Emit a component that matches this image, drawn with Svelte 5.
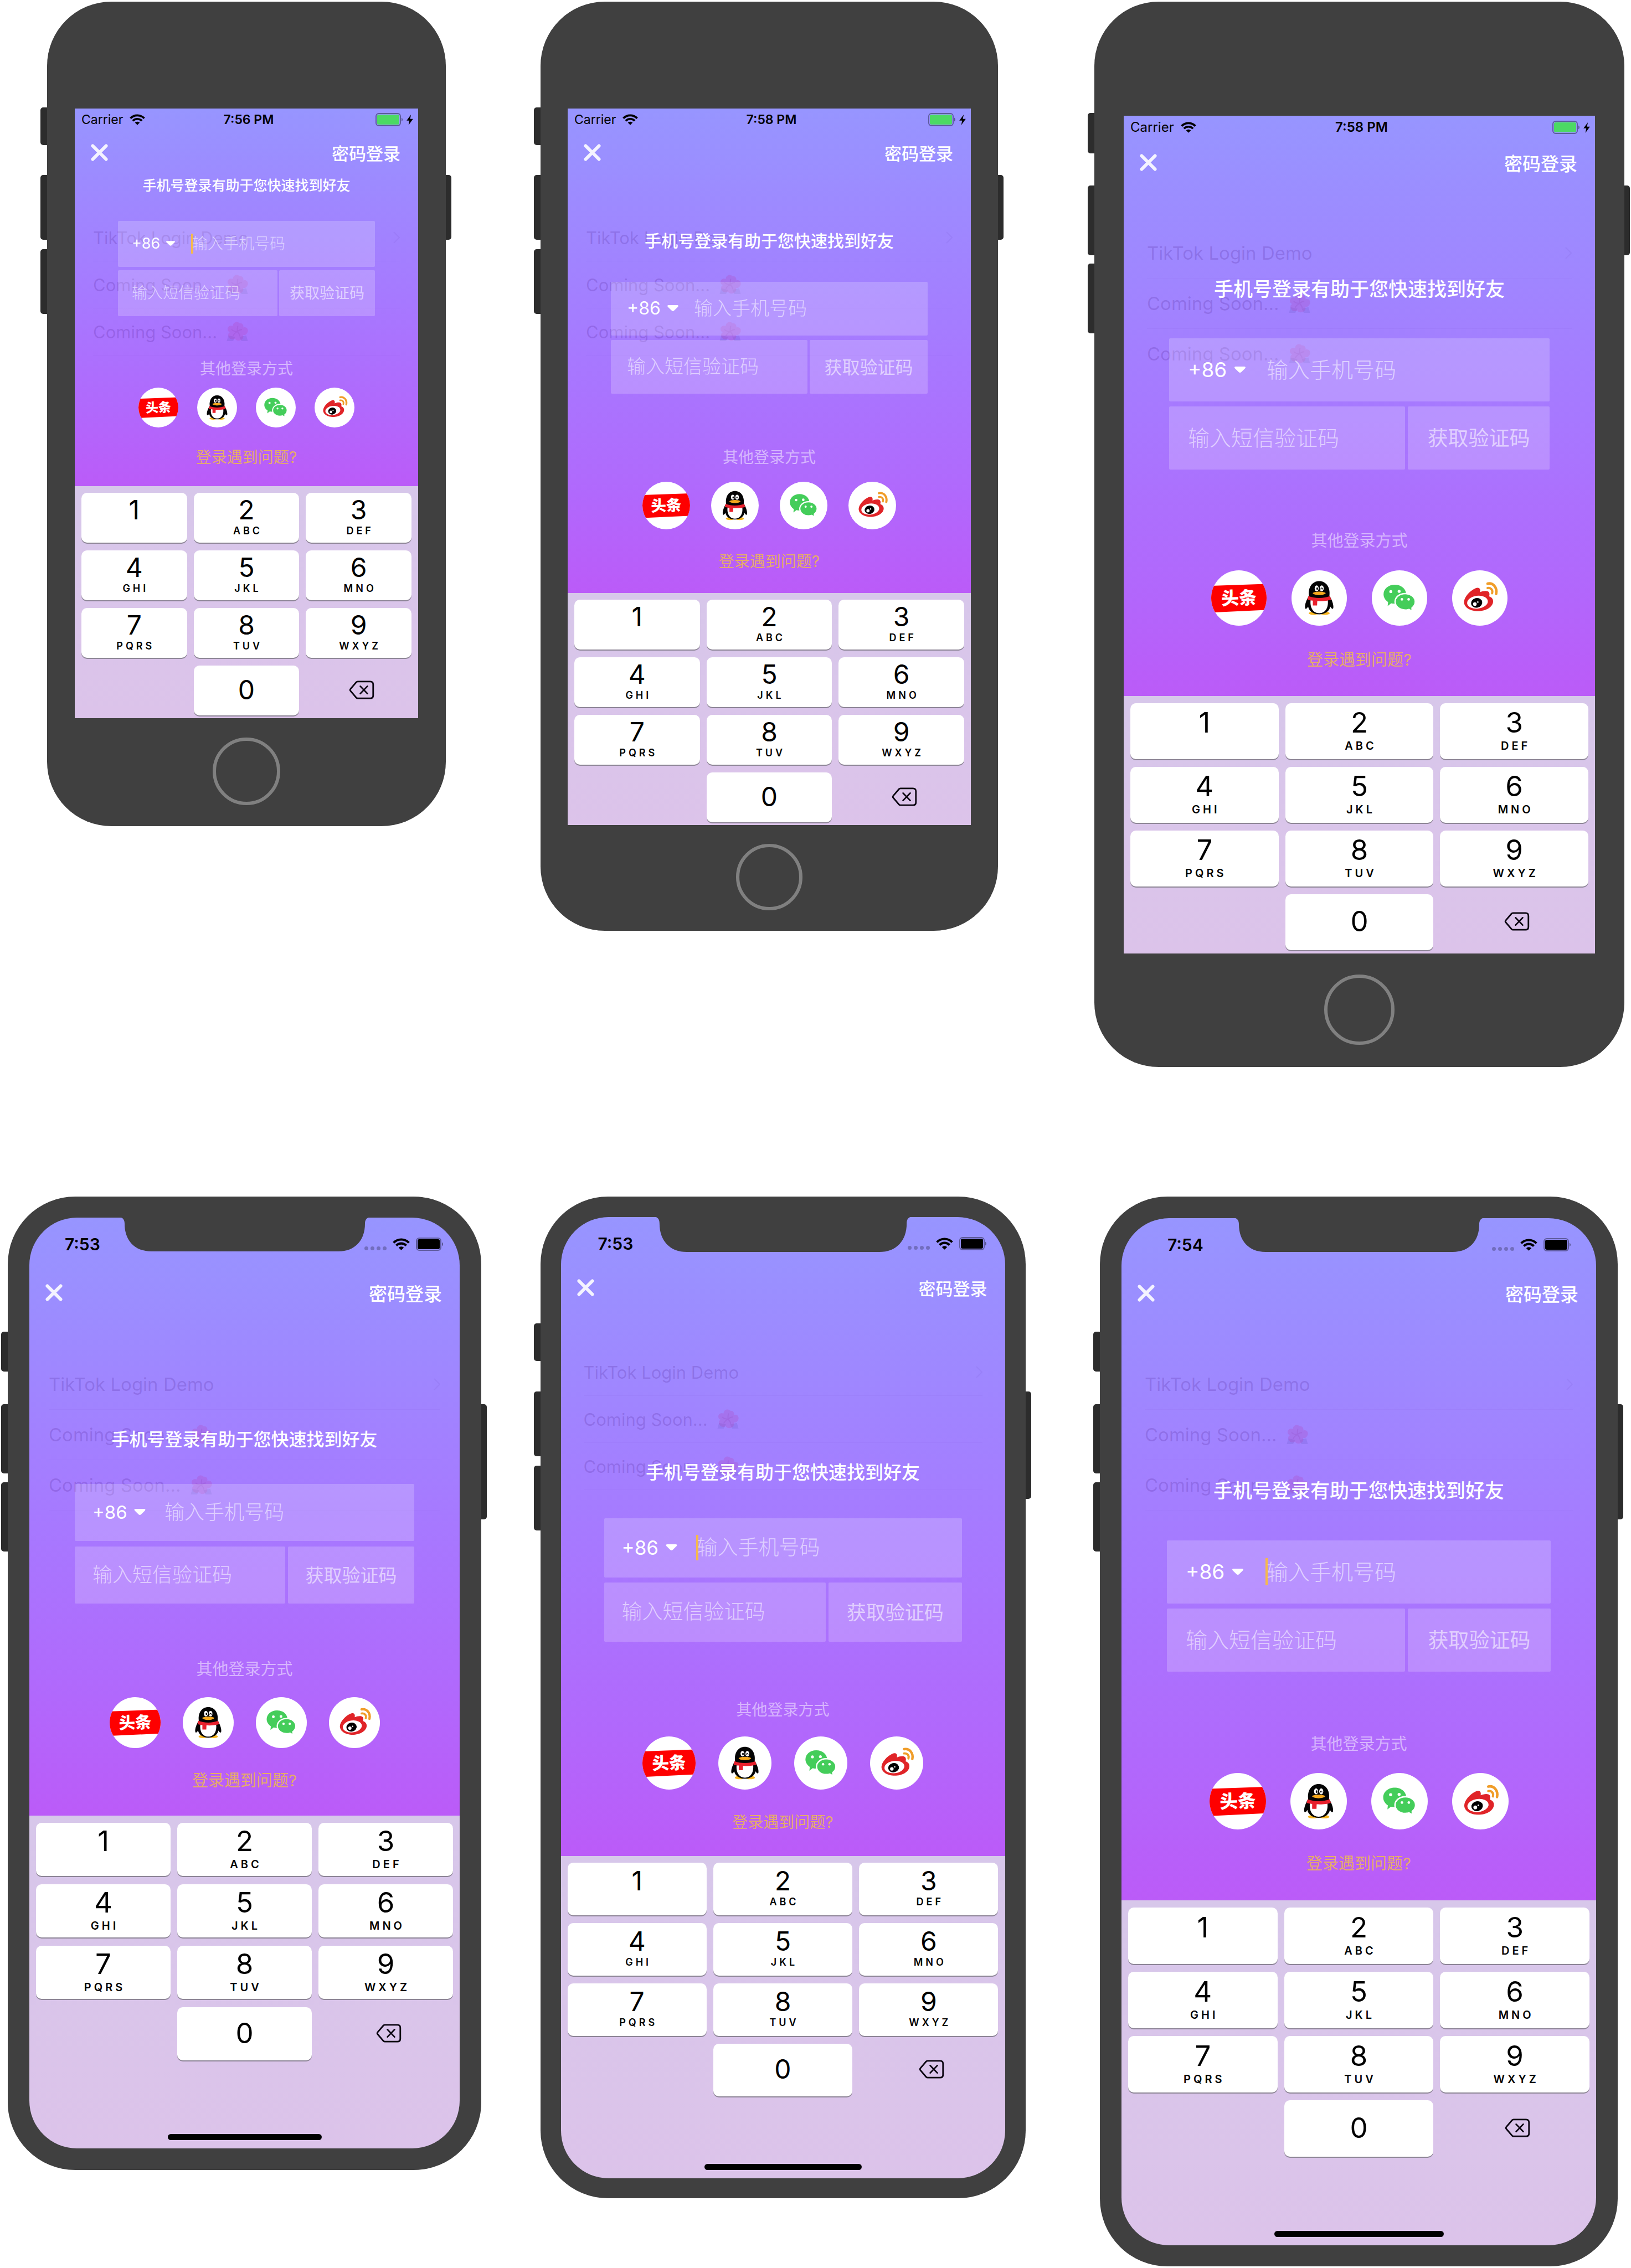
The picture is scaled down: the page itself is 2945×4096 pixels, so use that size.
<script>
  const rows = [
    [
      { model: 'se', time: '7:56 PM', notch: false, focused: true },
      { model: 'eight', time: '7:58 PM', notch: false, focused: false },
      { model: 'plus', time: '7:58 PM', notch: false, focused: false }
    ],
    [
      { model: 'ten', time: '7:53', notch: true, focused: false },
      { model: 'tenr', time: '7:53', notch: true, focused: true },
      { model: 'max', time: '7:54', notch: true, focused: true }
    ]
  ];

  const keys = [
    ['1', ''],
    ['2', 'ABC'],
    ['3', 'DEF'],
    ['4', 'GHI'],
    ['5', 'JKL'],
    ['6', 'MNO'],
    ['7', 'PQRS'],
    ['8', 'TUV'],
    ['9', 'WXYZ']
  ];

  const listItems = [
    { label: 'TikTok Login Demo', link: true },
    { label: 'Coming Soon...', link: false },
    { label: 'Coming Soon...', link: false }
  ];
</script>

{#snippet wifi()}
  <svg class="wifi" viewBox="0 0 30 21" aria-hidden="true">
    <g fill="none" stroke="#000" stroke-width="4">
      <path d="M1.600 8A18.600 18.600 0 0 1 28.400 8" />
      <path d="M6.300 12.900A12 12 0 0 1 23.700 12.900" />
    </g>
    <path d="M15 21 10.400 16.500A6.500 6.500 0 0 1 19.600 16.500Z" />
  </svg>
{/snippet}

{#snippet battery(fill)}
  <svg class="battery" viewBox="0 0 51 24" aria-hidden="true">
    <rect x="1" y="1" width="44" height="22" rx="5" fill="none" stroke="#000" stroke-opacity=".38" stroke-width="2" />
    <rect x="3" y="3" width="40" height="18" rx="3" {fill} />
    <path d="M47 8.500a4 4 0 0 1 0 7z" fill-opacity=".42" />
  </svg>
{/snippet}

{#snippet flower()}
  <svg class="flower" viewBox="0 0 42 40" aria-hidden="true">
    <path d="M4 27 1 38 13 38 17 30zM38 27 41 38 29 38 25 30z" fill="#4a3fa8" opacity=".14" />
    <g fill="#b832a4" opacity=".2">
      <path d="M21 20C12 17 10 6 16 3c4-3 8 0 9 1 6-1 9 5 7 8 8-2 11 5 8 10-2 4-6 5-8 4 2 6-3 11-9 11-4 0-6-2-6-4-5 4-12 1-13-5C3 24 5 22 7 21 1 19 1 11 7 9c7-2 12 5 14 11z" />
    </g>
    <path d="M21 20c3-3 6-4 9-4M21 20c3 3 5 6 5 9M21 20c-4 2-7 5-8 8M21 20c-4 0-8-1-11-4M21 20c0-4 0-8 1-11" fill="none" stroke="#7a2ba0" stroke-width="2" opacity=".12" />
  </svg>
{/snippet}

{#snippet toutiao()}
  <svg viewBox="0 0 100 100" aria-hidden="true">
    <path d="M0 28 100 24.4V71.4L0 76.2z" fill="#fe0000" />
    <text x="50" y="61.5" text-anchor="middle" font-size="32" font-weight="900" fill="#fff" transform="rotate(-2 50 50)">头条</text>
  </svg>
{/snippet}

{#snippet qq()}
  <svg viewBox="0 0 100 100" aria-hidden="true">
    <ellipse cx="40" cy="77.5" rx="9" ry="3" fill="#f7b51e" />
    <ellipse cx="60" cy="77.5" rx="9" ry="3" fill="#f7b51e" />
    <path d="M31.5 46C29.5 30 38 19.5 50 19.5S70.500 30 68.500 46C72 51 76.500 62 75.500 67.500 75 71.500 72 69 70 65.500 68.500 74 60 79.500 50 79.500S31.500 74 30 65.500C28 69 25 71.500 24.500 67.500 23.500 62 28 51 31.500 46z" fill="#040404" />
    <path d="M34.500 54C33 66 38 77.500 50 77.500S67 66 65.500 54z" fill="#fff" />
    <path d="M30.500 46.500C42 51 58 51 69.500 46.500L71.500 53C66 55 57 56 46.500 55.500L46.200 63.500H38.500V54.800C35 54.500 32 54 28.800 53z" fill="#e8202c" />
    <ellipse cx="45.400" cy="32.500" rx="3.600" ry="5.200" fill="#fff" />
    <ellipse cx="54.600" cy="32.500" rx="3.600" ry="5.200" fill="#fff" />
    <ellipse cx="46.400" cy="33" rx="1.500" ry="2.300" />
    <path d="M53 34.500c0-3.500 3-3.500 3 0" fill="none" stroke="#000" stroke-width="1.200" />
    <path d="M38.200 41C42 37.500 58 37.500 61.800 41 60 46 40 46 38.200 41z" fill="#f5a81c" />
  </svg>
{/snippet}

{#snippet wechat()}
  <svg viewBox="0 0 100 100" aria-hidden="true">
    <g fill="#44cd5a">
      <path d="M41.500 26C53 26 62 33.500 62 43.300S53 60.500 41.500 60.500C39 60.500 37 60.200 35 59.600L28.600 64.500 29.400 57.300C24.500 54 21.200 49 21.200 43.300 21.200 33.500 30 26 41.500 26z" />
      <path d="M60.300 42C70.500 42 78.500 48.500 78.500 56.800 78.500 61.200 76 65.300 72.600 68L73 74.200 67 70.700C65 71.300 62.500 71.700 60.300 71.700 50 71.700 42 65 42 56.800S50 42 60.300 42z" stroke="#fff" stroke-width="2.600" />
    </g>
    <g fill="#fff">
      <ellipse cx="34.300" cy="38.500" rx="2.700" ry="2.700" />
      <ellipse cx="49.300" cy="38" rx="2.700" ry="2.700" />
      <circle cx="54.300" cy="52.400" r="2.300" />
      <circle cx="66.500" cy="52.400" r="2.300" />
    </g>
  </svg>
{/snippet}

{#snippet weibo()}
  <svg viewBox="0 0 100 100" aria-hidden="true">
    <path d="M21.500 57C22 48 32 37 42 32.500 48 30 52 32.500 50.500 39.500 56 37 64 36 66.500 39.500 68 42 67.500 44.500 66.800 47 71 48.500 74.500 51.500 74 57 73 67 60 73.800 46.500 73.800 33 73.800 21.200 67 21.500 57z" fill="#e02428" />
    <ellipse cx="45.800" cy="57.500" rx="18.800" ry="11.600" fill="#fff" transform="rotate(-7 45.800 57.500)" />
    <ellipse cx="44.300" cy="58.800" rx="10.200" ry="8.700" transform="rotate(-12 44.300 58.800)" />
    <circle cx="41" cy="61" r="3.300" fill="#fff" />
    <circle cx="46.400" cy="57.300" r="1.400" fill="#fff" />
    <g fill="none" stroke="#f09d28" stroke-linecap="round">
      <path d="M64 24C74 22 82 31 79.500 42.500" stroke-width="4.600" />
      <path d="M64 32C70 31 74 35.500 72.200 41.500" stroke-width="4" />
    </g>
  </svg>
{/snippet}

{#snippet phone(d)}
  <article class="device {d.model}" class:notched={d.notch}>
    <span class="side mute"></span>
    <span class="side up"></span>
    <span class="side down"></span>
    <span class="side power"></span>
    <div class="body">
      <div class="screen">
        <section class="login">
          <ul class="behind">
            {#each listItems as item}
              <li>
                <span>{item.label}</span>
                {#if item.link}
                  <svg class="chevron" viewBox="0 0 12 22" aria-hidden="true"><path d="M1 1 11 11 1 21" /></svg>
                {:else}
                  {@render flower()}
                {/if}
              </li>
            {/each}
          </ul>

          {#if d.notch}
            <svg class="notch" viewBox="0 0 458 62" preserveAspectRatio="none" aria-hidden="true">
              <path d="M0 0C8 0 12 4 12 12 12 42 30 62 60 62H398C428 62 446 42 446 12 446 4 450 0 458 0z" />
            </svg>
            <div class="status">
              <span class="time">{d.time}</span>
              <span class="signals">
                <span class="dots"><i></i><i></i><i></i><i></i></span>
                {@render wifi()}
                {@render battery('#000')}
              </span>
            </div>
          {:else}
            <div class="status">
              <span class="carrier">Carrier {@render wifi()}</span>
              <span class="time">{d.time}</span>
              <span class="signals">
                {@render battery('#4cd964')}
                <svg class="bolt" viewBox="0 0 11 18" aria-hidden="true"><path d="M7.500 0 0 10.200H4.800L3.300 18 11 7.400H6z" /></svg>
              </span>
            </div>
          {/if}

          <nav>
            <button class="close" aria-label="关闭">
              <svg viewBox="0 0 32 32" aria-hidden="true"><path d="M3.500 3.500 28.500 28.500M28.500 3.500 3.500 28.500" /></svg>
            </button>
            <a href="#password">密码登录</a>
          </nav>

          <h2>手机号登录有助于您快速找到好友</h2>

          <form onsubmit={(e) => e.preventDefault()}>
            <div class="field phone-field">
              <div class="area">
                <select aria-label="国家或地区代码"><option>+86</option></select>
                <svg class="drop" viewBox="0 0 22 12" aria-hidden="true"><path d="M2.500 0H19.500C22 0 22.500 2 21 3.500L13.500 10.800C12 12.300 10 12.300 8.500 10.800L1 3.500C-.5 2 0 0 2.500 0z" /></svg>
              </div>
              {#if d.focused}<span class="caret"></span>{/if}
              <input type="tel" placeholder="输入手机号码" aria-label="手机号码" />
            </div>
            <div class="field code-field">
              <input type="text" placeholder="输入短信验证码" aria-label="短信验证码" />
            </div>
            <button class="get-code" type="submit">获取验证码</button>
          </form>

          <p class="other">其他登录方式</p>
          <div class="providers">
            <button aria-label="头条">{@render toutiao()}</button>
            <button aria-label="QQ">{@render qq()}</button>
            <button aria-label="微信">{@render wechat()}</button>
            <button aria-label="微博">{@render weibo()}</button>
          </div>
          <a class="help" href="#help">登录遇到问题?</a>
        </section>

        <section class="keyboard">
          <div class="keys">
            {#each keys as [digit, letters]}
              <button class="key"><span class="digit">{digit}</span><span class="letters">{letters}</span></button>
            {/each}
            <span></span>
            <button class="key"><span class="digit">0</span></button>
            <button class="erase" aria-label="删除">
              <svg viewBox="0 0 48 36" aria-hidden="true">
                <path d="M16.500 2H40.500C44 2 46 4 46 7.500V28.500C46 32 44 34 40.500 34H16.500C15.300 34 14.500 33.600 13.700 32.800L2.800 20C1.700 18.700 1.700 17.300 2.800 16L13.700 3.200C14.500 2.400 15.300 2 16.500 2z" />
                <path d="M21.500 11 35 25M35 11 21.500 25" />
              </svg>
            </button>
          </div>
          {#if d.notch}<div class="indicator"></div>{/if}
        </section>
      </div>
      {#if !d.notch}<div class="chin"><button class="home" aria-label="主屏幕"></button></div>{/if}
    </div>
  </article>
{/snippet}

<main>
  {#each rows as row, i}
    <div class="row" class:lower={i === 1}>
      {#each row as d}
        {@render phone(d)}
      {/each}
    </div>
  {/each}
</main>

<style>
  :global(body) {
    margin: 0;
    background: #fff;
  }

  main {
    display: flex;
    flex-direction: column;
    gap: 234px;
    padding: 3px 0;
    box-sizing: border-box;
    overflow: hidden;
    font-family: Inter, 'Noto Sans CJK SC', sans-serif;
    color: #000;
  }

  .row {
    display: flex;
    align-items: flex-start;
    justify-content: space-between;
    padding: 0 12px 0 85px;
  }

  .row.lower {
    padding: 0 24px 0 14px;
  }

  button,
  input,
  select {
    margin: 0;
    padding: 0;
    border: 0;
    background: none;
    font: inherit;
    color: inherit;
    outline: 0;
  }

  button {
    cursor: pointer;
  }

  svg {
    display: block;
    flex: none;
  }

  /* Device metrics */
  .device {
    --status: 40px;
    --nav: 82px;
    --nav-font: 31px;
    --inset: 78px;
    --list-font: 31px;
    --list-row: 85px;
    --small-font: 28px;
    --digit: 48px;
    --digit-line: 44px;
    --letters: 18px;
    --key-gap: 14px;
    --stack-gap: 6px;
    --pad: 12px;
    position: relative;
    min-width: 0;
    z-index: 0;
  }

  .se {
    flex: 0 1 720px;
    --frame-top: 193px;
    --frame: 50px;
    --chin: 195px;
    --ring: 122px;
    --list-top: 191px;
    --list-pad: 33px;
    --title-gap: 1px;
    --title: 25px;
    --form-gap: 48px;
    --field: 83px;
    --field-gap: 6px;
    --field-split: 3px;
    --field-pad: 25px;
    --area: 134px;
    --input: 28px;
    --button: 27px;
    --drop: 16px;
    --caret: 36px;
    --other-gap: 79px;
    --icons-gap: 18px;
    --icon: 72px;
    --icon-space: 34px;
    --help-gap: 38px;
    --login-end: 36px;
    --key: 90px;
    --keyboard-end: 5px;
  }

  .eight {
    flex: 0 1 826px;
    margin-right: 3px;
    --frame-top: 193px;
    --frame: 49px;
    --chin: 191px;
    --ring: 120px;
    --list-top: 191px;
    --list-pad: 33px;
    --title-gap: 101px;
    --title: 30px;
    --form-gap: 58px;
    --field: 97px;
    --field-gap: 8px;
    --field-split: 4px;
    --field-pad: 29px;
    --area: 150px;
    --input: 34px;
    --button: 32px;
    --drop: 20px;
    --caret: 42px;
    --other-gap: 99px;
    --icons-gap: 28px;
    --icon: 86px;
    --icon-space: 38px;
    --help-gap: 42px;
    --login-end: 41px;
    --key: 90px;
    --keyboard-end: 5px;
  }

  .plus,
  .ten,
  .max {
    --nav-font: 33px;
    --inset: 82px;
    --list-font: 33px;
    --list-row: 91px;
    --small-font: 29px;
    --digit: 51px;
    --digit-line: 48px;
    --letters: 20px;
    --stack-gap: 8px;
    --pad: 13px;
  }

  .plus {
    flex: 0 1 957px;
    --status: 42px;
    --nav: 88px;
    --frame-top: 206px;
    --frame: 53px;
    --chin: 205px;
    --ring: 127px;
    --list-top: 203px;
    --list-pad: 42px;
    --title-gap: 167px;
    --title: 35px;
    --form-gap: 73px;
    --field: 114px;
    --field-gap: 9px;
    --field-split: 5px;
    --field-pad: 34px;
    --area: 176px;
    --input: 39px;
    --button: 37px;
    --drop: 22px;
    --caret: 48px;
    --other-gap: 113px;
    --icons-gap: 37px;
    --icon: 100px;
    --icon-space: 45px;
    --help-gap: 46px;
    --login-end: 49px;
    --key: 101px;
    --keyboard-end: 6px;
  }

  .notched {
    --status: 96px;
  }

  .ten {
    flex: 0 1 855px;
    --frame-top: 38px;
    --frame: 39px;
    --chin: 39px;
    --notch-width: 458px;
    --notch-height: 62px;
    --status-left: 64px;
    --status-right: 28px;
    --list-top: 256px;
    --list-pad: 35px;
    --title-gap: 207px;
    --title: 32px;
    --form-gap: 64px;
    --field: 103px;
    --field-gap: 10px;
    --field-split: 5px;
    --field-pad: 32px;
    --area: 162px;
    --input: 36px;
    --button: 33px;
    --drop: 21px;
    --caret: 46px;
    --other-gap: 103px;
    --icons-gap: 34px;
    --icon: 92px;
    --icon-space: 40px;
    --help-gap: 43px;
    --login-end: 47px;
    --key: 96px;
    --key-gap: 15px;
    --indicator-gap: 133px;
    --indicator: 278px;
  }

  .tenr {
    flex: 0 1 876px;
    margin-right: 28px;
    --nav: 66px;
    --frame-top: 37px;
    --frame: 37px;
    --chin: 36px;
    --notch-width: 471px;
    --notch-height: 64px;
    --status-left: 67px;
    --status-right: 32px;
    --list-top: 238px;
    --list-pad: 41px;
    --title-gap: 283px;
    --title: 33px;
    --form-gap: 67px;
    --field: 107px;
    --field-gap: 9px;
    --field-split: 5px;
    --field-pad: 32px;
    --area: 168px;
    --input: 37px;
    --button: 35px;
    --drop: 21px;
    --caret: 46px;
    --other-gap: 107px;
    --icons-gap: 32px;
    --icon: 96px;
    --icon-space: 41px;
    --help-gap: 43px;
    --login-end: 45px;
    --key: 95px;
    --indicator-gap: 122px;
    --indicator: 284px;
  }

  .max {
    flex: 0 1 935px;
    --frame-top: 39px;
    --frame: 39px;
    --chin: 38px;
    --notch-width: 458px;
    --notch-height: 62px;
    --status-left: 83px;
    --status-right: 44px;
    --list-top: 255px;
    --list-pad: 42px;
    --title-gap: 298px;
    --title: 35px;
    --form-gap: 74px;
    --field: 114px;
    --field-gap: 9px;
    --field-split: 5px;
    --field-pad: 34px;
    --area: 180px;
    --input: 39px;
    --button: 37px;
    --drop: 22px;
    --caret: 49px;
    --other-gap: 115px;
    --icons-gap: 36px;
    --icon: 102px;
    --icon-space: 44px;
    --help-gap: 46px;
    --login-end: 50px;
    --key: 102px;
    --indicator-gap: 134px;
    --indicator: 306px;
  }

  /* Hardware */
  .body {
    background: #404040;
    border-radius: 116px;
    padding: var(--frame-top) var(--frame) 0;
  }

  .notched .body {
    border-radius: 122px;
    padding-bottom: var(--chin);
  }

  .side {
    position: absolute;
    z-index: -1;
    left: -12px;
    width: 24px;
    border-radius: 5px;
    background: #2c2c2c;
  }

  .mute { top: 191px; height: 68px; }
  .up { top: 313px; height: 117px; }
  .down { top: 447px; height: 117px; }
  .power { top: 313px; height: 117px; left: auto; right: -10px; }

  .plus .mute { top: 201px; height: 73px; }
  .plus .up { top: 332px; height: 126px; }
  .plus .down { top: 473px; height: 126px; }
  .plus .power { top: 332px; height: 126px; }

  .notched .mute { top: 244px; height: 72px; }
  .notched .up { top: 375px; height: 125px; }
  .notched .down { top: 516px; height: 125px; }
  .notched .power { top: 375px; height: 208px; }

  .tenr .mute { top: 229px; height: 68px; }
  .tenr .up { top: 352px; height: 117px; }
  .tenr .down { top: 486px; height: 117px; }
  .tenr .power { top: 352px; height: 194px; }

  .chin {
    display: flex;
    align-items: center;
    justify-content: center;
    box-sizing: border-box;
    height: var(--chin);
    padding-bottom: 3px;
  }

  .home {
    box-sizing: border-box;
    width: var(--ring);
    height: var(--ring);
    border: 6px solid #808080;
    border-radius: 50%;
  }

  .screen {
    overflow: hidden;
  }

  .notched .screen {
    border-radius: 86px;
  }

  /* Login */
  .login {
    position: relative;
    display: flex;
    flex-direction: column;
    padding-bottom: var(--login-end);
    background: linear-gradient(#9795ff, #a778ff 52%, #b168fc 80%, #bb5bf8);
  }

  .notch {
    position: absolute;
    top: -1px;
    left: 50%;
    width: var(--notch-width);
    height: var(--notch-height);
    transform: translateX(-50%);
    fill: #404040;
  }

  .behind {
    position: absolute;
    top: var(--list-top);
    left: var(--list-pad);
    right: var(--list-pad);
    margin: 0;
    padding: 0;
    list-style: none;
    font-size: var(--list-font);
    color: rgba(50, 0, 110, 0.16);
  }

  .behind li {
    box-sizing: border-box;
    display: flex;
    align-items: center;
    gap: 16px;
    height: var(--list-row);
    border-bottom: 1px solid rgba(60, 0, 120, 0.03);
  }

  .flower {
    width: 41px;
    height: 38px;
  }

  .chevron {
    width: 12px;
    height: 22px;
    margin-left: auto;
    fill: none;
    stroke: rgba(50, 0, 110, 0.05);
    stroke-width: 2;
  }

  .status {
    position: relative;
    display: grid;
    grid-template-columns: 1fr auto 1fr;
    align-items: center;
    height: var(--status);
    padding: 0 4px 0 12px;
    font-size: 23px;
    line-height: 30px;
  }

  .plus .status {
    font-size: 24px;
  }

  .carrier,
  .signals {
    display: flex;
    align-items: center;
    gap: 12px;
  }

  .signals {
    justify-content: flex-end;
    gap: 5px;
    margin-right: 5px;
  }

  .time {
    font-weight: 600;
  }

  .wifi {
    width: 28px;
    height: 20px;
  }

  .battery {
    width: 51px;
    height: 24px;
  }

  .bolt {
    width: 12px;
    height: 19px;
  }

  .notched .status {
    display: flex;
    justify-content: space-between;
    padding: 0 var(--status-right) 0 var(--status-left);
    font-size: 30px;
  }

  .notched .signals {
    gap: 11px;
    margin: 0;
  }

  .notched .wifi {
    width: 31px;
    height: 22px;
  }

  .dots {
    display: flex;
    gap: 4px;
    padding-top: 15px;
  }

  .dots i {
    width: 7px;
    height: 7px;
    border-radius: 50%;
    background: rgba(0, 0, 0, 0.25);
  }

  nav {
    position: relative;
    box-sizing: border-box;
    display: flex;
    align-items: center;
    justify-content: space-between;
    height: var(--nav);
    padding: 0 32px 3px 29px;
    font-size: var(--nav-font);
    font-weight: 500;
  }

  a {
    color: #fff;
    text-decoration: none;
  }

  .close svg {
    width: 31px;
    height: 31px;
    fill: none;
    stroke: #f4f3ff;
    stroke-width: 6;
    stroke-linecap: round;
  }

  h2 {
    position: relative;
    margin: var(--title-gap) 0 0;
    font-size: var(--title);
    font-weight: 500;
    line-height: 32px;
    text-align: center;
    white-space: nowrap;
    color: #fff;
  }

  form {
    position: relative;
    display: grid;
    grid-template-columns: minmax(0, 5fr) minmax(0, 3fr);
    gap: var(--field-gap) var(--field-split);
    margin: var(--form-gap) var(--inset) 0;
  }

  .field,
  .get-code {
    box-sizing: border-box;
    display: flex;
    align-items: center;
    height: var(--field);
    padding-bottom: 2px;
    border-radius: 2px;
    background: rgba(255, 255, 255, 0.2);
  }

  .phone-field {
    grid-column: 1 / -1;
  }

  .area {
    box-sizing: border-box;
    display: flex;
    flex: none;
    align-items: center;
    gap: 12px;
    width: var(--area);
    padding-left: var(--field-pad);
    font-size: var(--button);
    color: #fff;
  }

  .se .area {
    gap: 10px;
  }

  select {
    appearance: none;
  }

  .drop {
    width: var(--drop);
    height: 11px;
    fill: #fff;
  }

  .caret {
    flex: none;
    width: 4px;
    height: var(--caret);
    margin: 0 -2px;
    background: #f5b94c;
  }

  input {
    flex: 1;
    min-width: 0;
    font-size: var(--input);
    font-weight: 300;
  }

  input::placeholder {
    color: rgba(255, 255, 255, 0.56);
    opacity: 1;
  }

  .code-field {
    padding-left: var(--field-pad);
  }

  .get-code {
    justify-content: center;
    padding-bottom: 4px;
    font-size: var(--button);
    color: rgba(255, 255, 255, 0.58);
    white-space: nowrap;
  }

  .other {
    margin: var(--other-gap) 0 0;
    font-size: var(--small-font);
    line-height: 32px;
    text-align: center;
    color: rgba(255, 255, 255, 0.5);
  }

  .providers {
    display: flex;
    justify-content: center;
    gap: var(--icon-space);
    margin-top: var(--icons-gap);
  }

  .providers button {
    width: var(--icon);
    height: var(--icon);
    border-radius: 50%;
    overflow: hidden;
    background: #fff;
  }

  .help {
    align-self: center;
    margin-top: var(--help-gap);
    font-size: var(--small-font);
    line-height: 32px;
    color: #e6ac68;
  }

  /* Keyboard */
  .keyboard {
    padding: var(--pad) 12px var(--keyboard-end, 15px);
    background: linear-gradient(#d7c7ea, #dcc3ea);
  }

  .keys {
    display: grid;
    grid-template-columns: repeat(3, minmax(0, 1fr));
    gap: var(--key-gap) 12px;
  }

  .key,
  .erase {
    box-sizing: border-box;
    display: flex;
    flex-direction: column;
    align-items: center;
    justify-content: center;
    gap: var(--stack-gap);
    height: var(--key);
    padding-bottom: 3px;
  }

  .key {
    border-radius: 10px;
    background: #fff;
    box-shadow: 0 2px 0 #8d8596;
  }

  .digit {
    font-size: var(--digit);
    line-height: var(--digit-line);
  }

  .letters {
    height: 20px;
    padding-left: 5px;
    font-size: var(--letters);
    font-weight: 600;
    line-height: 20px;
    letter-spacing: 5px;
  }

  .erase {
    padding-left: 10px;
  }

  .erase svg {
    width: 46px;
    height: 34px;
    fill: none;
    stroke: #0a0410;
    stroke-width: 3;
    stroke-linecap: round;
  }

  .indicator {
    width: var(--indicator);
    height: 11px;
    margin: var(--indicator-gap) auto 0;
    border-radius: 6px;
    background: #000;
  }
</style>
